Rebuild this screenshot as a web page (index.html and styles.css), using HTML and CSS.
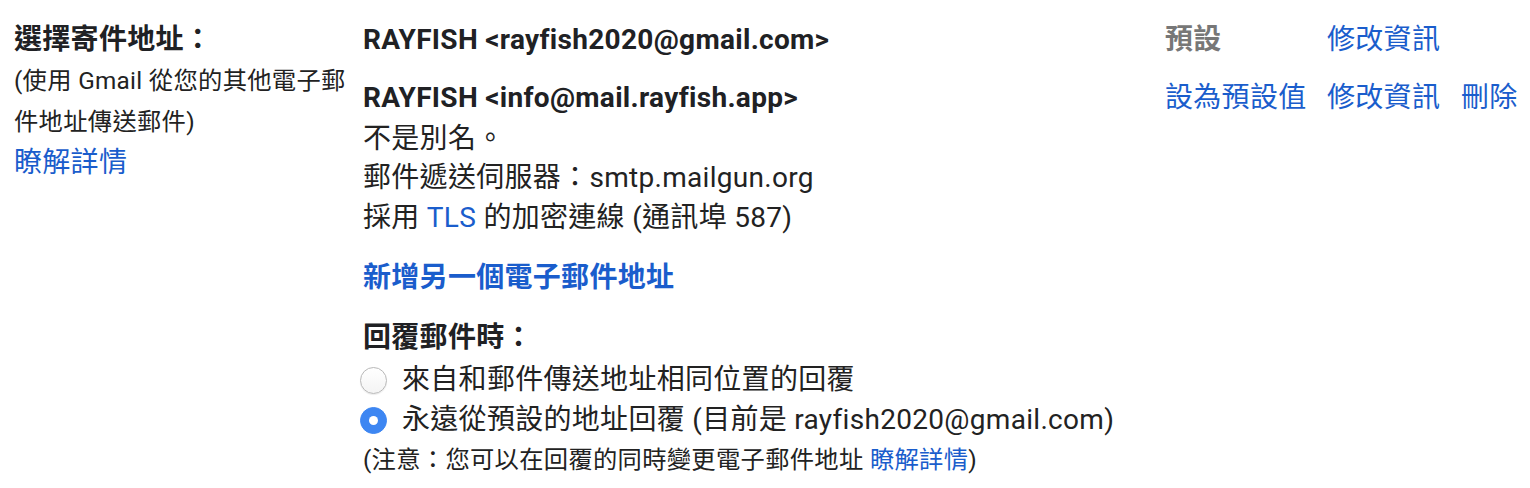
FILE: index.html
```html
<!DOCTYPE html>
<html lang="zh-Hant">
<head>
<meta charset="utf-8">
<title>選擇寄件地址</title>
<link rel="stylesheet" href="styles.css">
</head>
<body>
<div class="settings">
  <div class="label-col">
    <div class="label-title">選擇寄件地址：</div>
    <div class="label-note">(使用 Gmail 從您的其他電子郵件地址傳送郵件)</div>
    <a class="link" href="#">瞭解詳情</a>
  </div>
  <div class="content-col">
    <div class="addr-row first">
      <div class="addr">
        <div class="addr-name">RAYFISH &lt;rayfish2020@gmail.com&gt;</div>
      </div>
      <div class="act default">預設</div>
      <div class="act"><a class="link" href="#">修改資訊</a></div>
      <div class="act"></div>
    </div>
    <div class="addr-row">
      <div class="addr">
        <div class="addr-name">RAYFISH &lt;info@mail.rayfish.app&gt;</div>
        <div class="alias">不是別名。</div>
        <div>郵件遞送伺服器：smtp.mailgun.org</div>
        <div>採用 <a class="link" href="#">TLS</a> 的加密連線 (通訊埠 587)</div>
      </div>
      <div class="act"><a class="link" href="#">設為預設值</a></div>
      <div class="act"><a class="link" href="#">修改資訊</a></div>
      <div class="act"><a class="link" href="#">刪除</a></div>
    </div>
    <div class="add-row"><a class="link bold" href="#">新增另一個電子郵件地址</a></div>
    <div class="reply">
      <div class="reply-title">回覆郵件時：</div>
      <label class="radio-row"><span class="radio"></span><span>來自和郵件傳送地址相同位置的回覆</span></label>
      <label class="radio-row"><span class="radio checked"></span><span>永遠從預設的地址回覆 (目前是 rayfish2020@gmail.com)</span></label>
      <div class="note">(注意：您可以在回覆的同時變更電子郵件地址 <a class="link" href="#">瞭解詳情</a>)</div>
    </div>
  </div>
</div>
</body>
</html>
```
FILE: styles.css
```css
html, body {
  margin: 0;
  padding: 0;
  background: #ffffff;
}
body {
  font-family: Roboto, "Noto Sans CJK TC", sans-serif;
  font-size: 28px;
  line-height: 40px;
  letter-spacing: 0.3px;
  color: #222222;
}
.settings {
  display: grid;
  grid-template-columns: 363px 1fr;
  padding-top: 20px;
}
.label-col {
  padding-left: 14px;
  display: flex;
  flex-direction: column;
  align-items: flex-start;
}
.label-title {
  font-weight: 700;
  color: #202124;
}
.label-note {
  font-size: 24.3px;
  line-height: 41px;
  width: 340px;
  color: #222;
}
.label-col .link {
  line-height: 42px;
}
.link {
  color: #1a5dcc;
  text-decoration: none;
}
.bold {
  font-weight: 700;
}
.addr-row {
  display: grid;
  grid-template-columns: 802px 162px 134px 1fr;
}
.addr-row.first {
  padding-bottom: 18px;
}
.addr-name {
  font-weight: 700;
  color: #202124;
}
.alias {
  padding-top: 2px;
  line-height: 38px;
}
.act {
  white-space: nowrap;
}
.act.default {
  color: #777777;
  font-weight: 700;
}
.add-row {
  padding-top: 20px;
}
.reply {
  padding-top: 20px;
}
.reply-title {
  font-weight: 700;
  color: #202124;
}
.radio-row {
  display: flex;
  align-items: center;
  gap: 15px;
  margin-left: -3px;
}
.radio-row:first-of-type {
  padding-top: 2px;
}
.radio {
  box-sizing: border-box;
  width: 27px;
  height: 27px;
  border-radius: 50%;
  border: 1px solid #b8b8b8;
  background: linear-gradient(#ffffff, #f4f4f4);
  box-shadow: 0 1px 1px rgba(0,0,0,0.08);
  flex: none;
  display: flex;
  align-items: center;
  justify-content: center;
}
.radio.checked {
  background: #3d86f2;
  border-color: #3d86f2;
  box-shadow: none;
}
.radio.checked::after {
  content: "";
  width: 9px;
  height: 9px;
  border-radius: 50%;
  background: #ffffff;
}
.note {
  font-size: 24.3px;
}
```
